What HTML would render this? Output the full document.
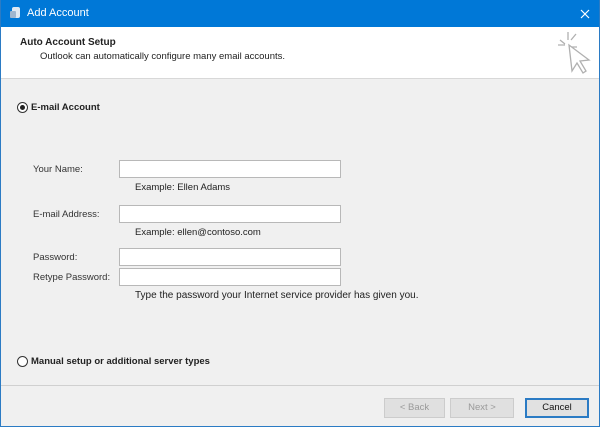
<!DOCTYPE html>
<html><head><style>
*{margin:0;padding:0;box-sizing:border-box}
body{width:600px;height:427px;overflow:hidden;font-family:"Liberation Sans",sans-serif;font-size:9.5px;color:#222;background:#f0f0f0;position:relative}
.abs{position:absolute}
.win{position:absolute;left:0;top:0;width:600px;height:427px;border:1px solid #2b7bc4;border-top:none}
.title{left:0;top:0;width:600px;height:27px;background:#0078d7;color:#fff;font-size:11px}
.hdr{left:1px;top:27px;width:598px;height:52px;background:#fff;border-bottom:1px solid #d8d8d8}
.inp{position:absolute;left:119px;width:222px;height:18px;background:#fff;border:1px solid #b8b8b8}
.lbl{position:absolute;left:33px;color:#333}
.btn{position:absolute;top:398px;height:20px;border:1px solid #ccc;background:#e0e0e0;color:#9a9a9a;text-align:center;line-height:18px;font-size:9.5px}
.radio{position:absolute;width:11px;height:11px;border:1px solid #333;border-radius:50%;background:#fff}
</style></head><body>
<div class="abs title">
<svg class="abs" style="left:9px;top:6px" width="13" height="14" viewBox="0 0 13 14"><rect x="3" y="1" width="8" height="11" rx="2" fill="#dfe8f2"/><rect x="1" y="5" width="6" height="7" rx="1" fill="#9fb6cf"/></svg>
<span class="abs" style="left:27px;top:7px">Add Account</span>
<svg class="abs" style="left:580px;top:9px" width="10" height="10"><path d="M1 1L9 9M9 1L1 9" stroke="#fff" stroke-width="1.2"/></svg>
</div>
<div class="abs hdr">
<div class="abs" style="left:19px;top:10px;font-weight:bold;font-size:10px">Auto Account Setup</div>
<div class="abs" style="left:39px;top:24px">Outlook can automatically configure many email accounts.</div>
<svg class="abs" style="left:555px;top:4px" width="35" height="44" viewBox="0 0 35 44" fill="none" stroke="#b0b0b0" stroke-width="1.3"><path d="M12 1v8M4 9l5 4M2 14h7M20 3l-5 6M14 16h7"/><path d="M13 14l3 26 5-8 6 10 3-2-6-10 9-1z" fill="#fff"/></svg>
</div>
<div class="radio" style="left:17px;top:102px"><div style="position:absolute;left:2px;top:2px;width:5px;height:5px;border-radius:50%;background:#222"></div></div>
<div class="abs" style="left:31px;top:102px;font-weight:bold">E-mail Account</div>
<div class="lbl" style="top:164px">Your Name:</div>
<div class="inp" style="top:160px"></div>
<div class="abs" style="left:135px;top:182px">Example: Ellen Adams</div>
<div class="lbl" style="top:209px">E-mail Address:</div>
<div class="inp" style="top:205px"></div>
<div class="abs" style="left:135px;top:227px">Example: ellen@contoso.com</div>
<div class="lbl" style="top:252px">Password:</div>
<div class="inp" style="top:248px"></div>
<div class="lbl" style="top:272px">Retype Password:</div>
<div class="inp" style="top:268px"></div>
<div class="abs" style="left:135px;top:290px;font-size:10px">Type the password your Internet service provider has given you.</div>
<div class="radio" style="left:17px;top:356px"></div>
<div class="abs" style="left:31px;top:356px;font-weight:bold">Manual setup or additional server types</div>
<div class="abs" style="left:1px;top:385px;width:598px;height:1px;background:#d0d0d0"></div>
<div class="btn" style="left:384px;width:61px">&lt; Back</div>
<div class="btn" style="left:450px;width:64px">Next &gt;</div>
<div class="btn" style="left:525px;width:64px;border:1px solid #2b7bc4;background:#e1e1e1;color:#111;box-shadow:inset 0 0 0 1px #2b7bc4">Cancel</div>
<div class="win"></div>
</body></html>
